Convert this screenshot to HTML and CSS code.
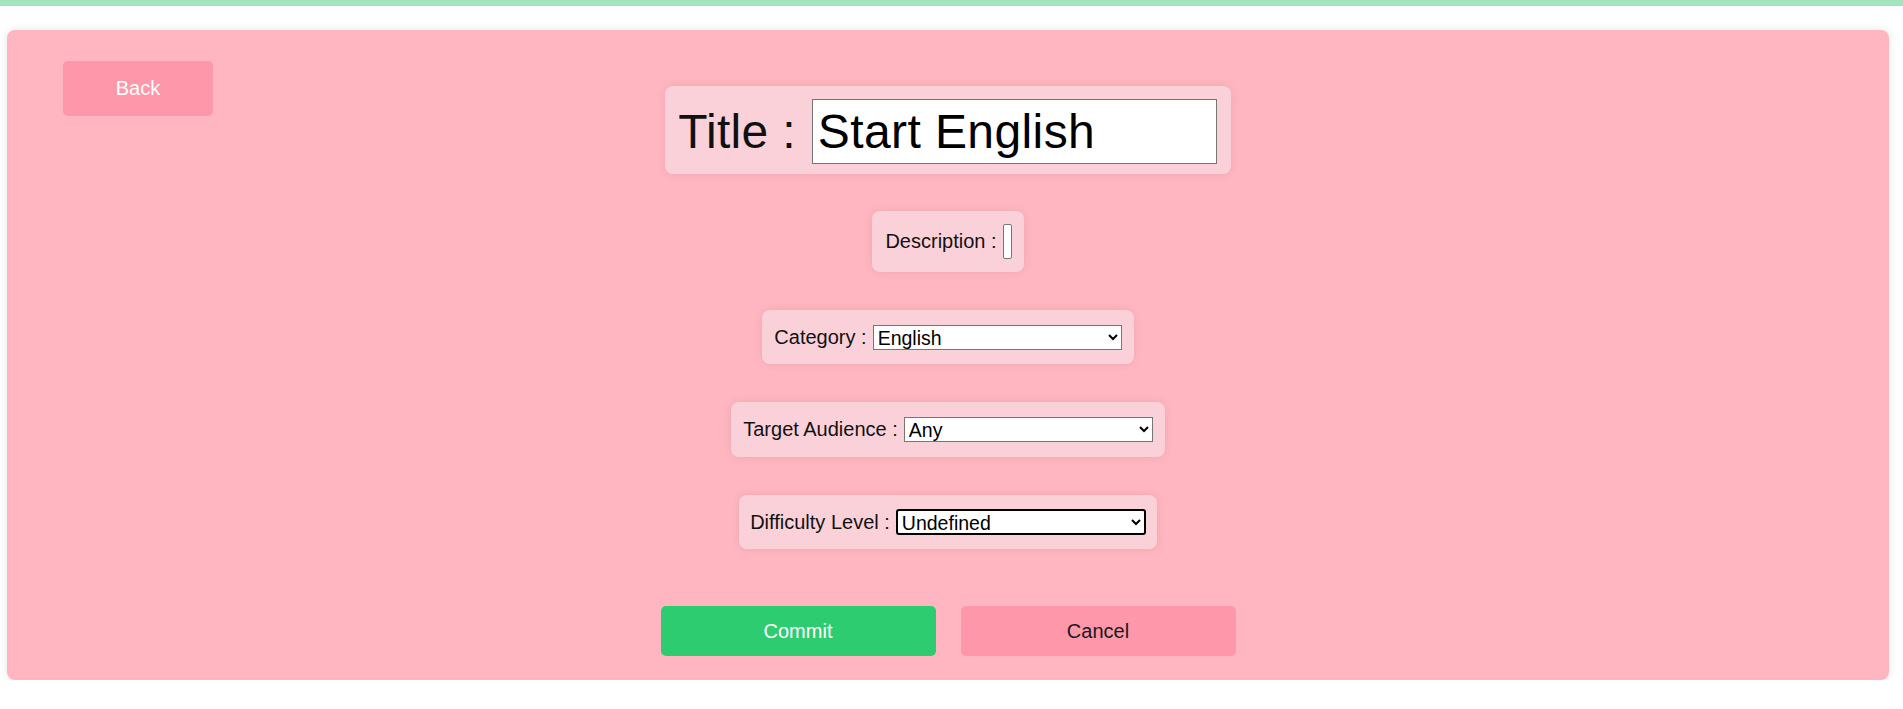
FILE: index.html
```html
<!DOCTYPE html>
<html lang="en">
<head>
<meta charset="utf-8">
<title>Edit Course</title>
<link rel="stylesheet" href="styles.css">
</head>
<body>
<div class="topbar"></div>
<main class="card">
  <div class="header">
    <button class="btn btn-back">Back</button>
    <div class="field field-title">
      <label class="label" for="title">Title :</label>
      <input id="title" class="title-input" type="text" value="Start English">
    </div>
  </div>
  <div class="form">
    <div class="field field-desc">
      <label class="label" for="desc">Description :</label>
      <textarea id="desc" class="desc-input"></textarea>
    </div>
    <div class="field field-cat">
      <label class="label" for="cat">Category :</label>
      <select id="cat" class="select"><option>English</option></select>
    </div>
    <div class="field field-aud">
      <label class="label" for="aud">Target Audience :</label>
      <select id="aud" class="select"><option>Any</option></select>
    </div>
    <div class="field field-diff">
      <label class="label" for="diff">Difficulty Level :</label>
      <select id="diff" class="select select-focus"><option>Undefined</option></select>
    </div>
  </div>
  <div class="actions">
    <button class="btn btn-commit">Commit</button>
    <button class="btn btn-cancel">Cancel</button>
  </div>
</main>
</body>
</html>
```

FILE: styles.css
```css
* { box-sizing: border-box; }

body {
  margin: 0;
  font-family: "Liberation Sans", Arial, sans-serif;
  background: #ffffff;
  color: #111;
}

.topbar {
  height: 6px;
  background: #a3e4c0;
}

.card {
  margin: 24px 14px 0 7px;
  height: 650px;
  background: #ffb6c1;
  border-radius: 8px;
  box-shadow: 0 0 10px rgba(0, 0, 0, 0.1);
  padding: 31px 56px 24px;
  display: flex;
  flex-direction: column;
}

.header {
  display: grid;
  grid-template-columns: 1fr auto 1fr;
  align-items: start;
}

.btn {
  border: none;
  border-radius: 5px;
  font-family: "Liberation Sans", Arial, sans-serif;
  font-size: 20px;
  cursor: pointer;
}

.btn-back {
  justify-self: start;
  width: 150px;
  height: 55px;
  background: #ff97aa;
  color: #fff;
}

.field {
  display: flex;
  align-items: center;
  background: #fbd1d9;
  border-radius: 8px;
  box-shadow: 0 0 10px rgba(0, 0, 0, 0.08);
  padding: 0 12px;
}

.label {
  font-size: 20px;
  margin-right: 6px;
  white-space: nowrap;
}

.field-title {
  margin-top: 25px;
  padding: 13px 14px 10px 13px;
}

.field-title .label {
  font-size: 48px;
  letter-spacing: 0.3px;
  margin-right: 16px;
}

.title-input {
  width: 405px;
  height: 65px;
  font-family: "Liberation Sans", Arial, sans-serif;
  font-size: 48px;
  letter-spacing: 0.4px;
  padding: 1px 2px 1px 5px;
  border: 1px solid #767676;
  border-radius: 0;
  color: #000;
  background: #fff;
}

.form {
  display: flex;
  flex-direction: column;
  align-items: center;
  gap: 38px;
  margin-top: 37px;
}

.field-desc {
  height: 61px;
  padding: 0 12px 0 13px;
}

.desc-input {
  width: 9px;
  height: 35px;
  padding: 0;
  border: 1px solid #767676;
  border-radius: 2px;
  resize: none;
  background: #fff;
}

.field-cat { height: 54px; }
.field-aud { height: 55px; }
.field-diff { height: 54px; padding: 0 11px; }

.select {
  width: 249px;
  height: 25px;
  font-family: "Liberation Sans", Arial, sans-serif;
  font-size: 19.5px;
  color: #000;
  background: #fff;
  border: 1px solid #767676;
  border-radius: 0;
}

.select-focus {
  width: 250px;
  height: 26px;
  border: 2px solid #000;
  border-radius: 3px;
}

.actions {
  display: flex;
  justify-content: center;
  gap: 25px;
  margin-top: 57px;
}

.btn-commit,
.btn-cancel {
  width: 275px;
  height: 50px;
}

.btn-commit {
  background: #2ecc71;
  color: #fff;
}

.btn-cancel {
  background: #ff97aa;
  color: #1a1a1a;
}
```
